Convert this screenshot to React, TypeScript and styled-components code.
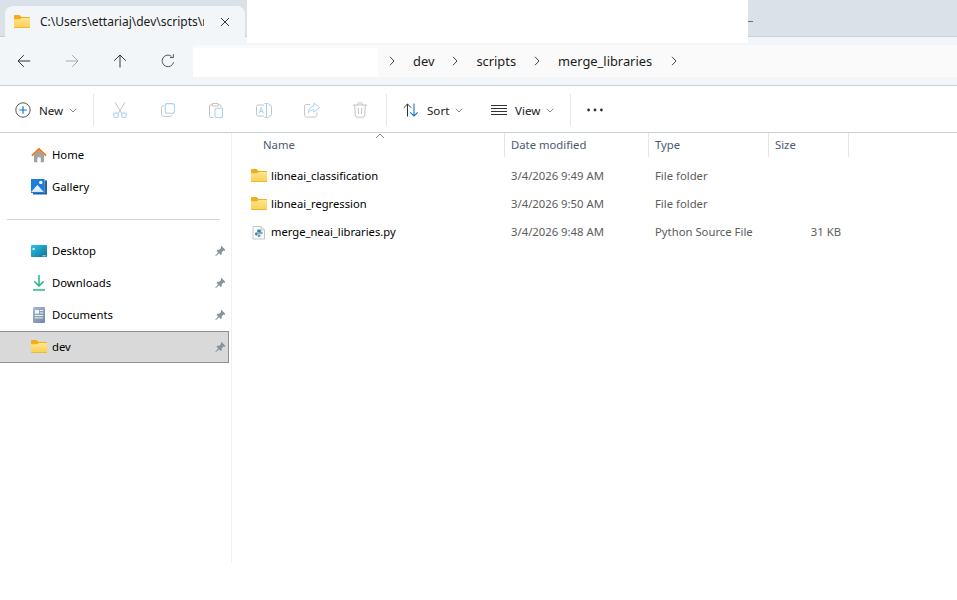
import React from "react";
import styled, { createGlobalStyle } from "styled-components";

const GlobalStyle = createGlobalStyle`
  html, body {
    margin: 0;
    padding: 0;
    background: #ffffff;
  }
  body {
    font-family: "Noto Sans", "Open Sans", sans-serif;
    font-size: 11.3px;
    color: #1a1a1a;
  }
`;

const Window = styled.div`
  position: relative;
  width: 957px;
  height: 600px;
  overflow: hidden;
  background: #ffffff;
`;

/* blanked out areas of the capture */
const TitleMask = styled.div`
  position: absolute;
  left: 247px;
  top: 0;
  width: 501px;
  height: 43px;
  background: #ffffff;
`;

const MinimizeMark = styled.div`
  position: absolute;
  left: 748px;
  top: 21px;
  width: 5px;
  height: 1px;
  background: #6b6f75;
`;

const TabStrip = styled.div`
  height: 36px;
  display: flex;
  align-items: flex-end;
  padding-left: 5px;
  background: #dae1e9;
  border-bottom: 1px solid #c8ced6;
`;

const Tab = styled.div`
  width: 240px;
  height: 31px;
  margin-bottom: -1px;
  display: flex;
  align-items: center;
  padding: 0 15px 0 9px;
  box-sizing: border-box;
  background: #f3f6f9;
  border-radius: 8px 8px 0 0;
`;

const TabTitle = styled.div`
  width: 164px;
  margin-left: 10px;
  overflow: hidden;
  white-space: nowrap;
  font-size: 12px;
  color: #1a1a1a;
`;

const TabClose = styled.div`
  margin-left: auto;
  display: flex;
`;

const NavRow = styled.div`
  height: 48px;
  display: flex;
  align-items: center;
  background: #f3f6f9;
  border-bottom: 1px solid #c9ced8;
`;

const NavButtons = styled.div`
  width: 193px;
  flex: none;
  display: flex;
`;

const NavButton = styled.div`
  width: 48px;
  height: 32px;
  display: flex;
  align-items: center;
  justify-content: center;
`;

const AddressBar = styled.div`
  position: relative;
  flex: 1;
  height: 32px;
  display: flex;
  align-items: center;
  padding-left: 192px;
  background: #fafafa;
`;

const AddressMask = styled.div`
  position: absolute;
  left: 0;
  top: 3px;
  width: 185px;
  height: 29px;
  background: #ffffff;
`;

const Crumb = styled.span`
  font-size: 12.85px;
  color: #1a1a1a;
  margin: 0 14px;
`;

const CrumbArrow = styled.span`
  display: flex;
  width: 14px;
  justify-content: center;
`;

const LastArrow = styled(CrumbArrow)`
  margin-left: 1px;
`;

const Toolbar = styled.div`
  height: 44px;
  padding-top: 2px;
  display: flex;
  align-items: center;
  background: #ffffff;
  border-bottom: 1px solid #c9d0d8;
`;

const ToolButton = styled.div<{ $width: number }>`
  width: ${(p) => p.$width}px;
  height: 32px;
  flex: none;
  display: flex;
  align-items: center;
  justify-content: center;
`;

const LabelButton = styled.div<{ $width: number; $pad: number }>`
  width: ${(p) => p.$width}px;
  padding-left: ${(p) => p.$pad}px;
  box-sizing: border-box;
  height: 32px;
  flex: none;
  display: flex;
  align-items: center;
`;

const ToolLabel = styled.span<{ $gap: number; $after: number }>`
  font-size: 11.6px;
  color: #1a1a1a;
  margin-left: ${(p) => p.$gap}px;
  margin-right: ${(p) => p.$after}px;
`;

const ToolDivider = styled.div`
  width: 1px;
  height: 32px;
  flex: none;
  background: #e6e6e6;
`;

const Body = styled.div`
  display: flex;
  height: 430px;
`;

const Sidebar = styled.nav`
  width: 231px;
  flex: none;
  padding-top: 6px;
  border-right: 1px solid #f0f0f0;
`;

const SideItem = styled.div<{ $selected?: boolean }>`
  width: 229px;
  height: 32px;
  box-sizing: border-box;
  display: flex;
  align-items: center;
  padding-left: 31px;
  background: ${(p) => (p.$selected ? "#d9d9d9" : "transparent")};
  border: 1px solid ${(p) => (p.$selected ? "#8f8f8f" : "transparent")};
  border-left-width: 0;
  font-size: 11.3px;
  color: #000000;
`;

const SideLabel = styled.span`
  margin-bottom: 2px;
`;

const SideIcon = styled.span`
  width: 16px;
  height: 16px;
  display: flex;
  flex: none;
  margin-right: 5px;
`;

const PinSlot = styled.span`
  margin-left: auto;
  margin-right: 2px;
  display: flex;
`;

const SideDivider = styled.div`
  height: 1px;
  width: 213px;
  margin: 16px 0 15px 7px;
  background: #d6d6d6;
`;

const Files = styled.main`
  flex: 1;
  position: relative;
`;

const HeaderRow = styled.div`
  height: 24px;
  display: flex;
`;

const HeaderCell = styled.div<{ $width: number }>`
  width: ${(p) => p.$width}px;
  flex: none;
  box-sizing: border-box;
  padding: 0 0 1px 6px;
  display: flex;
  align-items: center;
  border-right: 1px solid #e5e5e5;
  font-size: 11.3px;
  color: #4c5a70;
`;

const NameHeader = styled(HeaderCell)`
  padding-left: 31px;
`;

const SortCaret = styled.span`
  position: absolute;
  left: 143px;
  top: 0;
  display: flex;
`;

const Rows = styled.div`
  padding-top: 5px;
`;

const Row = styled.div`
  height: 28px;
  display: flex;
  align-items: center;
`;

const NameCell = styled.div`
  width: 273px;
  flex: none;
  padding-left: 19px;
  box-sizing: border-box;
  display: flex;
  align-items: center;
  gap: 4px;
  color: #000000;
  font-size: 11.2px;
`;

const NameText = styled.span`
  margin-bottom: 2px;
`;

const MetaCell = styled.div<{ $width: number }>`
  width: ${(p) => p.$width}px;
  flex: none;
  padding-left: 6px;
  margin-bottom: 2px;
  box-sizing: border-box;
  color: #5c5c5c;
  font-size: 11.3px;
`;

const SizeCell = styled.div`
  width: 72px;
  flex: none;
  margin-bottom: 2px;
  text-align: right;
  color: #5c5c5c;
  font-size: 11.3px;
`;

const FolderIcon = () => (
  <svg width="16" height="16" viewBox="0 0 16 16">
    <defs>
      <linearGradient id="folderBody" x1="0" y1="0" x2="0" y2="1">
        <stop offset="0" stopColor="#ffe58f" />
        <stop offset="1" stopColor="#fccf4d" />
      </linearGradient>
    </defs>
    <path d="M0 2C0 1.4 0.4 1 1 1H5.4L7.6 3H15C15.6 3 16 3.4 16 4V6H0Z" fill="#f0ae1a" />
    <path d="M0 5.2H6L7.8 4H15C15.6 4 16 4.4 16 5V13C16 13.6 15.6 14 15 14H1C0.4 14 0 13.6 0 13Z" fill="url(#folderBody)" />
    <path d="M0 13H16C16 13.6 15.6 14 15 14H1C0.4 14 0 13.6 0 13Z" fill="#f0b63a" />
  </svg>
);

const HomeIcon = () => (
  <svg width="16" height="16" viewBox="0 0 16 16">
    <path d="M3 7.8V14.8C3 15 3.2 15.2 3.4 15.2H6.3V10.8C6.3 10.5 6.5 10.3 6.8 10.3H9.2C9.5 10.3 9.7 10.5 9.7 10.8V15.2H12.6C12.8 15.2 13 15 13 14.8V7.8L8 3.6Z" fill="#a2a2a2" />
    <path d="M0.9 8.6L8 2L15.1 8.6" fill="none" stroke="#e8781f" strokeWidth="1.9" />
  </svg>
);

const GalleryIcon = () => (
  <svg width="16" height="16" viewBox="0 0 16 16">
    <defs>
      <linearGradient id="galleryPeak" x1="0" y1="0" x2="0" y2="1">
        <stop offset="0" stopColor="#ffffff" />
        <stop offset="1" stopColor="#cfe6fa" />
      </linearGradient>
    </defs>
    <rect x="0" y="0" width="13.5" height="14" fill="#1a7fd8" />
    <path d="M13.5 1.5H16V15.5H2V14H13.5Z" fill="#2a5fa8" />
    <circle cx="9.8" cy="3.4" r="1.7" fill="#ffffff" />
    <path d="M0 13L6.4 6L12.8 13Z" fill="url(#galleryPeak)" />
  </svg>
);

const DesktopIcon = () => (
  <svg width="16" height="16" viewBox="0 0 16 16">
    <defs>
      <linearGradient id="desktopFace" x1="0" y1="0" x2="1" y2="1">
        <stop offset="0" stopColor="#2cc6e8" />
        <stop offset="1" stopColor="#0f6f96" />
      </linearGradient>
    </defs>
    <rect x="0" y="2" width="16" height="12" rx="0.8" fill="url(#desktopFace)" />
    <rect x="1.6" y="5" width="2" height="2" fill="#e8f8fc" />
    <rect x="11.5" y="12.4" width="3.4" height="0.9" fill="#d6eef6" />
  </svg>
);

const DownloadIcon = () => (
  <svg width="16" height="16" viewBox="0 0 16 16">
    <path d="M8 -0.2V10.8M3.4 6.4L8 11L12.6 6.4" fill="none" stroke="#24b78f" strokeWidth="1.5" />
    <rect x="2" y="14.2" width="12" height="1.5" fill="#24b78f" />
  </svg>
);

const DocumentsIcon = () => (
  <svg width="16" height="16" viewBox="0 0 16 16">
    <defs>
      <linearGradient id="docFace" x1="0" y1="0" x2="1" y2="1">
        <stop offset="0" stopColor="#a9bbd2" />
        <stop offset="1" stopColor="#6f86a6" />
      </linearGradient>
    </defs>
    <rect x="2" y="0" width="12" height="16" rx="1" fill="url(#docFace)" />
    <rect x="4" y="3" width="4" height="3.6" fill="#f4f7fa" />
    <rect x="9" y="3" width="3.2" height="1" fill="#eaf0f6" />
    <rect x="9" y="5.4" width="3.2" height="1" fill="#eaf0f6" />
    <rect x="4" y="8" width="8.2" height="1" fill="#eaf0f6" />
    <rect x="4" y="10.4" width="8.2" height="1" fill="#eaf0f6" />
  </svg>
);

const PinIcon = () => (
  <svg width="11" height="12" viewBox="0 0 12 12">
    <path d="M7.2 0.6L11.4 4.8L10.4 5.6L9.4 5.4L7.4 7.4L7.4 9.6L6.4 10.4L1.6 5.6L2.4 4.6H4.6L6.6 2.6L6.4 1.4Z" fill="#88929b" />
    <path d="M3.8 7.4L0.6 11.4L4.6 8.2Z" fill="#88929b" stroke="#88929b" strokeWidth="0.6" />
  </svg>
);

const PythonFileIcon = () => (
  <svg width="16" height="16" viewBox="0 0 16 16">
    <path d="M2 2.5H10L13.5 6V15H2Z" fill="#fbfbfb" stroke="#c2c6ca" />
    <path d="M10 2.5V6H13.5" fill="#ececec" stroke="#c2c6ca" />
    <path d="M7.8 5.6C6.7 5.6 6.2 6 6.2 6.8V8H8.4V8.6H5.2C4.4 8.6 4 9.2 4 10C4 10.9 4.4 11.4 5.2 11.4H6.2V10.4C6.2 9.8 6.6 9.4 7.2 9.4H9C9.5 9.4 9.8 9 9.8 8.6V6.8C9.8 6 9.2 5.6 7.8 5.6Z" fill="#3d7ea6" />
    <path d="M7.8 13C8.9 13 9.4 12.6 9.4 11.8V10.8H7.2V10.2H10.4C11.2 10.2 11.6 9.6 11.6 8.8C11.6 7.9 11.2 7.4 10.4 7.4H10.2V8.6C10.2 9.3 9.8 9.8 9 9.8H7.2C6.8 9.8 6.6 10.1 6.6 10.4V11.8C6.6 12.6 7 13 7.8 13Z" fill="#5f9fc0" />
  </svg>
);

const Chevron = () => (
  <svg width="8" height="12" viewBox="0 0 8 12">
    <path d="M2 1.8L6 6L2 10.2" fill="none" stroke="#444444" strokeWidth="1" />
  </svg>
);

const SmallCaret = () => (
  <svg width="8" height="5" viewBox="0 0 8 5">
    <path d="M0.8 0.8L4 4L7.2 0.8" fill="none" stroke="#8a8a8a" strokeWidth="1" />
  </svg>
);

const NavArrow = ({ d, color }: { d: string; color: string }) => (
  <svg width="16" height="16" viewBox="0 0 16 16">
    <path d={d} fill="none" stroke={color} strokeWidth="1" />
  </svg>
);

const App: React.FC = () => {
  return (
    <Window>
      <GlobalStyle />
      <TabStrip>
        <Tab>
          <FolderIcon />
          <TabTitle>C:\Users\ettariaj\dev\scripts\merge_libraries</TabTitle>
          <TabClose>
            <svg width="10" height="10" viewBox="0 0 10 10">
              <path d="M1 1L9 9M9 1L1 9" stroke="#333333" strokeWidth="1" />
            </svg>
          </TabClose>
        </Tab>
      </TabStrip>
      <TitleMask />
      <MinimizeMark />

      <NavRow>
        <NavButtons>
          <NavButton>
            <NavArrow d="M14.2 8H2M7.8 2.2L2 8L7.8 13.8" color="#333333" />
          </NavButton>
          <NavButton>
            <NavArrow d="M1.8 8H14M8.2 2.2L14 8L8.2 13.8" color="#a8a8a8" />
          </NavButton>
          <NavButton>
            <NavArrow d="M8 14.5V2M2.2 7.8L8 2L13.8 7.8" color="#333333" />
          </NavButton>
          <NavButton>
            <svg width="16" height="16" viewBox="0 0 16 16">
              <path d="M13.6 9.2A5.8 5.8 0 1 1 11.6 3.4" fill="none" stroke="#555555" strokeWidth="1" />
              <path d="M13.4 1.2V4.6H10" fill="none" stroke="#555555" strokeWidth="1" />
            </svg>
          </NavButton>
        </NavButtons>
        <AddressBar>
          <AddressMask />
          <CrumbArrow><Chevron /></CrumbArrow>
          <Crumb>dev</Crumb>
          <CrumbArrow><Chevron /></CrumbArrow>
          <Crumb>scripts</Crumb>
          <CrumbArrow><Chevron /></CrumbArrow>
          <Crumb>merge_libraries</Crumb>
          <LastArrow><Chevron /></LastArrow>
        </AddressBar>
      </NavRow>

      <Toolbar>
        <LabelButton $width={93} $pad={15}>
          <svg width="16" height="16" viewBox="0 0 16 16">
            <circle cx="8" cy="8" r="7.2" fill="none" stroke="#555555" strokeWidth="1" />
            <path d="M8 4.2V11.8M4.2 8H11.8" stroke="#0f78d4" strokeWidth="1.2" />
          </svg>
          <ToolLabel $gap={8} $after={6}>New</ToolLabel>
          <SmallCaret />
        </LabelButton>
        <ToolDivider />
        <ToolButton $width={2} />
        <ToolButton $width={48}>
          <svg width="14" height="16" viewBox="0 0 14 16">
            <path d="M2 0.5L9 11.5M12 0.5L5 11.5" fill="none" stroke="#c4c4c4" strokeWidth="1" />
            <circle cx="3" cy="13.2" r="2.4" fill="none" stroke="#a9d3f2" strokeWidth="1.1" />
            <circle cx="11" cy="13.2" r="2.4" fill="none" stroke="#a9d3f2" strokeWidth="1.1" />
          </svg>
        </ToolButton>
        <ToolButton $width={48}>
          <svg width="14" height="14" viewBox="0 0 14 14">
            <path d="M3 2.8H2.4C1.3 2.8 0.5 3.6 0.5 4.7V11.2C0.5 12.4 1.5 13.4 2.7 13.4H9C10 13.4 10.8 12.7 10.9 11.7" fill="none" stroke="#c4c4c4" strokeWidth="1" />
            <rect x="4.2" y="0.6" width="9.2" height="9.6" rx="2" fill="none" stroke="#a9d3f2" strokeWidth="1.1" />
          </svg>
        </ToolButton>
        <ToolButton $width={48}>
          <svg width="14" height="15" viewBox="0 0 14 15">
            <path d="M3.4 1.8H1.7C1 1.8 0.5 2.3 0.5 3V13.3C0.5 14 1 14.5 1.7 14.5H4.4M9 1.8H10.8C11.5 1.8 12 2.3 12 3V4.4M3.4 0.5H9V3H3.4Z" fill="none" stroke="#c4c4c4" strokeWidth="1" />
            <rect x="6" y="5.2" width="7.5" height="9.3" rx="1.4" fill="none" stroke="#a9d3f2" strokeWidth="1.1" />
          </svg>
        </ToolButton>
        <ToolButton $width={48}>
          <svg width="16" height="15" viewBox="0 0 16 15">
            <path d="M8 2H2C1.2 2 0.5 2.7 0.5 3.5V11.5C0.5 12.3 1.2 13 2 13H8M12.5 2H14C14.8 2 15.5 2.7 15.5 3.5V11.5C15.5 12.3 14.8 13 14 13H12.5" fill="none" stroke="#c4c4c4" strokeWidth="1" />
            <path d="M8.5 0.5H12.5M10.5 0.5V14.5M8.5 14.5H12.5" fill="none" stroke="#a9d3f2" strokeWidth="1" />
            <path d="M3 10.5L5.2 4.5L7.4 10.5M3.8 8.5H6.6" fill="none" stroke="#a9d3f2" strokeWidth="1" />
          </svg>
        </ToolButton>
        <ToolButton $width={48}>
          <svg width="16" height="16" viewBox="0 0 16 16">
            <path d="M6 2.5H2.2C1.3 2.5 0.5 3.3 0.5 4.2V13.3C0.5 14.2 1.3 15 2.2 15H11.3C12.2 15 13 14.2 13 13.3V10.5" fill="none" stroke="#c4c4c4" strokeWidth="1" />
            <path d="M10 1L15.5 5.6L10 10.2V7.6C7.4 7.6 5.6 8.6 4.4 11C4.4 7.6 6.2 4.4 10 3.8Z" fill="none" stroke="#a9d3f2" strokeWidth="1" />
          </svg>
        </ToolButton>
        <ToolButton $width={48}>
          <svg width="14" height="16" viewBox="0 0 14 16">
            <path d="M0 3H14M4.8 3V1.8C4.8 1.2 5.2 0.8 5.8 0.8H8.2C8.8 0.8 9.2 1.2 9.2 1.8V3M1.6 3L2.4 13.8C2.5 14.6 3.1 15.2 3.9 15.2H10.1C10.9 15.2 11.5 14.6 11.6 13.8L12.4 3M5.4 6V12M8.6 6V12" fill="none" stroke="#c4c4c4" strokeWidth="1" />
          </svg>
        </ToolButton>
        <ToolButton $width={2} />
        <ToolDivider />
        <LabelButton $width={88} $pad={16}>
          <svg width="16" height="14" viewBox="0 0 16 14">
            <path d="M4.5 13.5V1M0.8 4.7L4.5 1L8.2 4.7" fill="none" stroke="#333333" strokeWidth="1" />
            <path d="M11 0.5V13M7.3 9.3L11 13L14.7 9.3" fill="none" stroke="#0f78d4" strokeWidth="1.1" />
          </svg>
          <ToolLabel $gap={8} $after={6}>Sort</ToolLabel>
          <SmallCaret />
        </LabelButton>
        <LabelButton $width={95} $pad={16}>
          <svg width="16" height="10" viewBox="0 0 16 10">
            <path d="M0 0.5H16M0 3.5H16M0 6.5H16M0 9.5H16" stroke="#333333" strokeWidth="1" />
          </svg>
          <ToolLabel $gap={8} $after={6}>View</ToolLabel>
          <SmallCaret />
        </LabelButton>
        <ToolDivider />
        <ToolButton $width={48}>
          <svg width="16" height="4" viewBox="0 0 16 4">
            <circle cx="1.6" cy="2" r="1.4" fill="#333333" />
            <circle cx="8" cy="2" r="1.4" fill="#333333" />
            <circle cx="14.4" cy="2" r="1.4" fill="#333333" />
          </svg>
        </ToolButton>
      </Toolbar>

      <Body>
        <Sidebar>
          <SideItem><SideIcon><HomeIcon /></SideIcon><SideLabel>Home</SideLabel></SideItem>
          <SideItem><SideIcon><GalleryIcon /></SideIcon><SideLabel>Gallery</SideLabel></SideItem>
          <SideDivider />
          <SideItem><SideIcon><DesktopIcon /></SideIcon><SideLabel>Desktop</SideLabel><PinSlot><PinIcon /></PinSlot></SideItem>
          <SideItem><SideIcon><DownloadIcon /></SideIcon><SideLabel>Downloads</SideLabel><PinSlot><PinIcon /></PinSlot></SideItem>
          <SideItem><SideIcon><DocumentsIcon /></SideIcon><SideLabel>Documents</SideLabel><PinSlot><PinIcon /></PinSlot></SideItem>
          <SideItem $selected><SideIcon><FolderIcon /></SideIcon><SideLabel>dev</SideLabel><PinSlot><PinIcon /></PinSlot></SideItem>
        </Sidebar>
        <Files>
          <SortCaret>
            <svg width="10" height="6" viewBox="0 0 10 6">
              <path d="M1 5L5 1L9 5" fill="none" stroke="#8a8a8a" strokeWidth="1" />
            </svg>
          </SortCaret>
          <HeaderRow>
            <NameHeader $width={273}>Name</NameHeader>
            <HeaderCell $width={144}>Date modified</HeaderCell>
            <HeaderCell $width={120}>Type</HeaderCell>
            <HeaderCell $width={80}>Size</HeaderCell>
          </HeaderRow>
          <Rows>
            <Row>
              <NameCell><FolderIcon /><NameText>libneai_classification</NameText></NameCell>
              <MetaCell $width={144}>3/4/2026 9:49 AM</MetaCell>
              <MetaCell $width={120}>File folder</MetaCell>
            </Row>
            <Row>
              <NameCell><FolderIcon /><NameText>libneai_regression</NameText></NameCell>
              <MetaCell $width={144}>3/4/2026 9:50 AM</MetaCell>
              <MetaCell $width={120}>File folder</MetaCell>
            </Row>
            <Row>
              <NameCell><PythonFileIcon /><NameText>merge_neai_libraries.py</NameText></NameCell>
              <MetaCell $width={144}>3/4/2026 9:48 AM</MetaCell>
              <MetaCell $width={120}>Python Source File</MetaCell>
              <SizeCell>31 KB</SizeCell>
            </Row>
          </Rows>
        </Files>
      </Body>
    </Window>
  );
};

export default App;
